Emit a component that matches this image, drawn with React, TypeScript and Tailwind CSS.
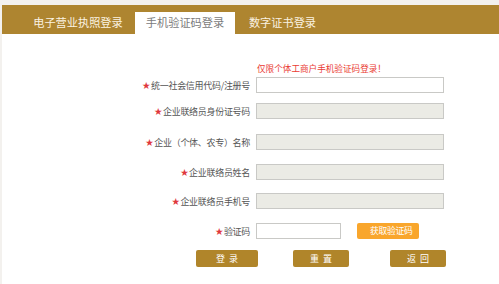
import React from 'react';

const FONT = "font-['Noto_Sans_CJK_SC','Noto_Sans',sans-serif]";

const rows = [
  { label: '统一社会信用代码/注册号', mt: 'mt-[3px]', disabled: false },
  { label: '企业联络员身份证号码', mt: 'mt-[10px]', disabled: true },
  { label: '企业（个体、农专）名称', mt: 'mt-[15px]', disabled: true },
  { label: '企业联络员姓名', mt: 'mt-[14px]', disabled: true },
  { label: '企业联络员手机号', mt: 'mt-[13px]', disabled: true },
];

function Label({ text }: { text: string }) {
  return (
    <div className="w-[248px] flex items-center justify-end text-[9px] leading-none text-[#555] tracking-[-0.3px]">
      <span className="text-[#e0383c] text-[8px] mr-[1px]">★</span>
      <span>{text}</span>
    </div>
  );
}

export default function App() {
  return (
    <div className={`w-[499px] h-[284px] bg-[#f3f1ee] pt-[5px] pl-[2px] flex flex-col ${FONT}`}>
      <div className="flex-1 bg-white flex flex-col">
        {/* tab bar */}
        <div className="h-[29px] bg-[#ae8530] flex items-end pl-[19px] text-[11.2px] leading-none">
          <div className="w-[114px] h-[22px] flex items-center justify-center text-[#fbf3e2]">电子营业执照登录</div>
          <div className="w-[100px] h-[22px] flex items-center justify-center bg-white text-[#7b7b7b]">手机验证码登录</div>
          <div className="w-[95px] h-[22px] flex items-center justify-center text-[#fbf3e2]">数字证书登录</div>
        </div>

        <div className="flex flex-col">
          <div className="mt-[28px] ml-[255px] h-[12px] flex items-center text-[8.6px] leading-none text-[#ea3b33]">
            仅限个体工商户手机验证码登录！
          </div>

          {rows.map((r, i) => (
            <div key={i} className={`flex items-center gap-[6px] ${r.mt}`}>
              <Label text={r.label} />
              <div
                className={`w-[188px] h-[16px] border border-[#c9c9c6] ${r.disabled ? 'bg-[#ebebe5]' : 'bg-white'}`}
              />
            </div>
          ))}

          <div className="flex items-center gap-[6px] mt-[14px]">
            <Label text="验证码" />
            <div className="w-[85px] h-[16px] border border-[#c9c9c6] bg-white" />
            <button className="ml-[10px] w-[62px] h-[16px] rounded-[2px] bg-[#f9a62c] text-white text-[8.8px] leading-none flex items-center pl-[13px] tracking-[-0.3px]">
              获取验证码
            </button>
          </div>

          <div className="flex items-center mt-[11px] text-[9px] leading-none text-white">
            <button className="ml-[194px] w-[62px] h-[17px] rounded-[2px] bg-[#b0852a] tracking-[4px] pl-[4px]">登录</button>
            <button className="ml-[35px] w-[56px] h-[17px] rounded-[2px] bg-[#b0852a] tracking-[4px] pl-[4px]">重置</button>
            <button className="ml-[41px] w-[56px] h-[17px] rounded-[2px] bg-[#b0852a] tracking-[4px] pl-[4px]">返回</button>
          </div>
        </div>
      </div>
    </div>
  );
}
